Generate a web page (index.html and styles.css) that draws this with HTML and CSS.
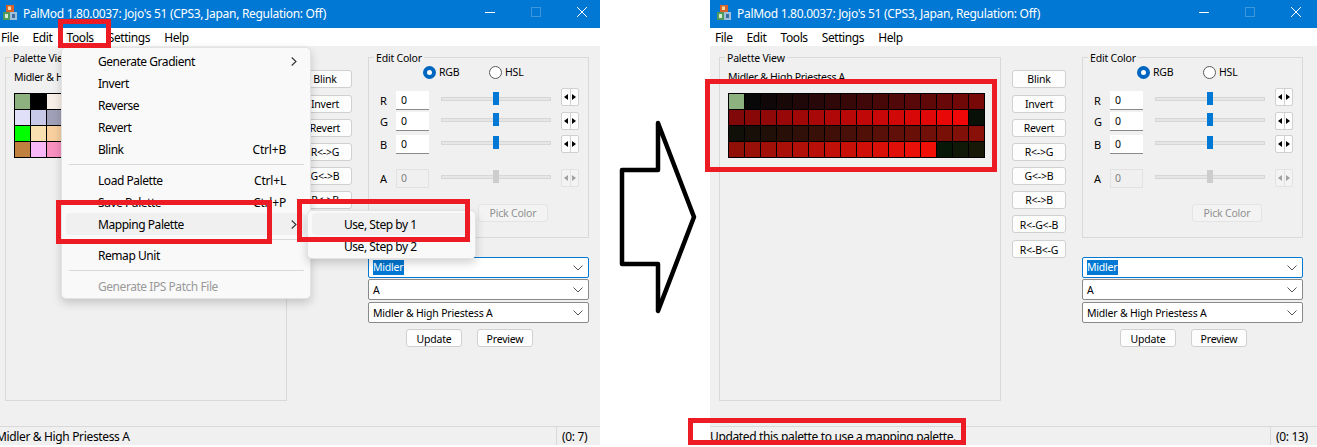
FILE: index.html
```html
<!DOCTYPE html>
<html lang="en">
<head>
<meta charset="utf-8">
<title>PalMod mapping palette</title>
<link rel="stylesheet" href="styles.css">
</head>
<body>
<div class="pane pane-left">
  <div class="window">
    <div class="titlebar">
      <svg class="app-icon" viewBox="0 0 14 15"><rect x="3" y="0" width="8" height="7" fill="#d9622b"/><rect x="5" y="1.5" width="3" height="3.5" fill="#f4d9a0"/><rect y="7" width="7" height="8" fill="#4f9a5a"/><rect x="7" y="7" width="7" height="8" fill="#9fc0dc"/><rect x="2" y="9" width="3" height="4" fill="#d7ecd2"/><rect x="9" y="9" width="3" height="4" fill="#3f6f9f"/></svg>
      <span class="title-text">PalMod 1.80.0037: Jojo's 51 (CPS3, Japan, Regulation: Off)</span>
      <div class="controls">
        <svg class="ctl" viewBox="0 0 10 10"><path d="M0 5.5H10" stroke="#fff"/></svg>
        <svg class="ctl" viewBox="0 0 10 10"><rect x=".5" y=".5" width="9" height="9" fill="none" stroke="#3d97dd"/></svg>
        <svg class="ctl" viewBox="0 0 10 10"><path d="M0 0L10 10M10 0L0 10" stroke="#fff"/></svg>
      </div>
    </div>
    <div class="menubar"><span>File</span><span>Edit</span><span class="hot">Tools</span><span>Settings</span><span>Help</span></div>
    <div class="client">
      <fieldset class="group palette-group">
        <legend>Palette View</legend>
        <div class="palette-name">Midler &amp; High Priestess A</div>
        <div class="palette">
          <i style="background:#8db280"></i><i style="background:#000000"></i><i style="background:#f8efe8"></i><i style="background:#f8e8e0"></i><i style="background:#e0d0d0"></i><i style="background:#c0b0b0"></i><i style="background:#a09090"></i><i style="background:#807070"></i><i style="background:#605050"></i><i style="background:#404040"></i><i style="background:#f8f8f8"></i><i style="background:#e8e8f8"></i><i style="background:#d8d8f8"></i><i style="background:#c8c8f0"></i><i style="background:#b8b8e8"></i><i style="background:#a8a8d8"></i>
          <i style="background:#e0e0f8"></i><i style="background:#c8c8e8"></i><i style="background:#a0a0b8"></i><i style="background:#8080a0"></i><i style="background:#606080"></i><i style="background:#404060"></i><i style="background:#f8f0c0"></i><i style="background:#f8e0a0"></i><i style="background:#f0c880"></i><i style="background:#d8a860"></i><i style="background:#b08040"></i><i style="background:#806030"></i><i style="background:#604020"></i><i style="background:#402810"></i><i style="background:#f8c0c0"></i><i style="background:#f8a0a0"></i>
          <i style="background:#00ff00"></i><i style="background:#f8e0b0"></i><i style="background:#f8d0a0"></i><i style="background:#e8b888"></i><i style="background:#d0a070"></i><i style="background:#b88858"></i><i style="background:#a07048"></i><i style="background:#885838"></i><i style="background:#704828"></i><i style="background:#583818"></i><i style="background:#402810"></i><i style="background:#f8f8a0"></i><i style="background:#f8e880"></i><i style="background:#f0d060"></i><i style="background:#d8b040"></i><i style="background:#b89030"></i>
          <i style="background:#c08040"></i><i style="background:#f8b8f8"></i><i style="background:#f890c0"></i><i style="background:#e070a0"></i><i style="background:#c05080"></i><i style="background:#a03060"></i><i style="background:#802040"></i><i style="background:#601030"></i><i style="background:#a0f8f8"></i><i style="background:#70d8e0"></i><i style="background:#50b0c0"></i><i style="background:#3090a0"></i><i style="background:#207080"></i><i style="background:#105060"></i><i style="background:#083040"></i><i style="background:#082030"></i>
        </div>
      </fieldset>
      <div class="actions">
        <button>Blink</button><button class="nudge">Invert</button><button>Revert</button><button>R&lt;-&gt;G</button><button>G&lt;-&gt;B</button><button>R&lt;-&gt;B</button><button class="lower">R&lt;-G&lt;-B</button><button class="nudge lower">R&lt;-B&lt;-G</button>
      </div>
      <div class="side">
        <fieldset class="group edit-group">
          <legend>Edit Color</legend>
          <div class="radios"><span class="radio on"></span><span class="radio-label">RGB</span><span class="radio"></span><span class="radio-label">HSL</span></div>
          <div class="chan chan-r"><span class="chan-label">R</span><span class="edit">0</span><span class="slider"><b></b></span><span class="spin"><em class="left"></em><em class="right"></em></span></div>
          <div class="chan chan-g"><span class="chan-label">G</span><span class="edit">0</span><span class="slider"><b></b></span><span class="spin"><em class="left"></em><em class="right"></em></span></div>
          <div class="chan chan-b"><span class="chan-label">B</span><span class="edit">0</span><span class="slider"><b></b></span><span class="spin"><em class="left"></em><em class="right"></em></span></div>
          <div class="chan chan-a off"><span class="chan-label">A</span><span class="edit">0</span><span class="slider"><b></b></span><span class="spin"><em class="left"></em><em class="right"></em></span></div>
          <button class="pick" disabled>Pick Color</button>
        </fieldset>
        <div class="combo focus"><span class="sel">Midler</span><svg class="chev" viewBox="0 0 10 6"><path d="M.5 .5L5 5L9.5 .5" fill="none" stroke="#555"/></svg></div>
        <div class="combo"><span>A</span><svg class="chev" viewBox="0 0 10 6"><path d="M.5 .5L5 5L9.5 .5" fill="none" stroke="#555"/></svg></div>
        <div class="combo third"><span>Midler &amp; High Priestess A</span><svg class="chev" viewBox="0 0 10 6"><path d="M.5 .5L5 5L9.5 .5" fill="none" stroke="#555"/></svg></div>
        <div class="bottom-btns"><button class="lower">Update</button><button class="lower">Preview</button></div>
      </div>
    </div>
    <div class="statusbar"><span class="status-msg">Midler &amp; High Priestess A</span><span class="status-pos">(0: 7)</span></div>
  </div>
</div>

<div class="menu menu-main">
  <div class="mi"><span>Generate Gradient</span><svg class="arrow" viewBox="0 0 6 9"><path d="M.7 .5L5 4.5L.7 8.5" fill="none" stroke="#333" stroke-width="1.1"/></svg></div>
  <div class="mi"><span>Invert</span></div>
  <div class="mi"><span>Reverse</span></div>
  <div class="mi"><span>Revert</span></div>
  <div class="mi"><span>Blink</span><span class="key">Ctrl+B</span></div>
  <div class="sep"></div>
  <div class="mi"><span>Load Palette</span><span class="key">Ctrl+L</span></div>
  <div class="mi"><span>Save Palette</span><span class="key">Ctrl+P</span></div>
  <div class="mi hover"><span>Mapping Palette</span><svg class="arrow" viewBox="0 0 6 9"><path d="M.7 .5L5 4.5L.7 8.5" fill="none" stroke="#333" stroke-width="1.1"/></svg></div>
  <div class="sep"></div>
  <div class="mi"><span>Remap Unit</span></div>
  <div class="sep"></div>
  <div class="mi dim"><span>Generate IPS Patch File</span></div>
</div>
<div class="menu menu-sub">
  <div class="mi hover"><span>Use, Step by 1</span></div>
  <div class="mi"><span>Use, Step by 2</span></div>
</div>

<div class="pane pane-right">
  <div class="window">
    <div class="titlebar">
      <svg class="app-icon" viewBox="0 0 14 15"><rect x="3" y="0" width="8" height="7" fill="#d9622b"/><rect x="5" y="1.5" width="3" height="3.5" fill="#f4d9a0"/><rect y="7" width="7" height="8" fill="#4f9a5a"/><rect x="7" y="7" width="7" height="8" fill="#9fc0dc"/><rect x="2" y="9" width="3" height="4" fill="#d7ecd2"/><rect x="9" y="9" width="3" height="4" fill="#3f6f9f"/></svg>
      <span class="title-text">PalMod 1.80.0037: Jojo's 51 (CPS3, Japan, Regulation: Off)</span>
      <div class="controls">
        <svg class="ctl" viewBox="0 0 10 10"><path d="M0 5.5H10" stroke="#fff"/></svg>
        <svg class="ctl" viewBox="0 0 10 10"><rect x=".5" y=".5" width="9" height="9" fill="none" stroke="#3d97dd"/></svg>
        <svg class="ctl" viewBox="0 0 10 10"><path d="M0 0L10 10M10 0L0 10" stroke="#fff"/></svg>
      </div>
    </div>
    <div class="menubar"><span>File</span><span>Edit</span><span>Tools</span><span>Settings</span><span>Help</span></div>
    <div class="client">
      <fieldset class="group palette-group">
        <legend>Palette View</legend>
        <div class="palette-name">Midler &amp; High Priestess A</div>
        <div class="palette">
          <i style="background:#8db280"></i><i style="background:#080808"></i><i style="background:#100808"></i><i style="background:#180808"></i><i style="background:#200808"></i><i style="background:#280808"></i><i style="background:#300808"></i><i style="background:#380808"></i><i style="background:#400808"></i><i style="background:#480808"></i><i style="background:#500808"></i><i style="background:#580808"></i><i style="background:#600808"></i><i style="background:#680808"></i><i style="background:#700808"></i><i style="background:#780808"></i>
          <i style="background:#800808"></i><i style="background:#880808"></i><i style="background:#900808"></i><i style="background:#980808"></i><i style="background:#a00808"></i><i style="background:#a80808"></i><i style="background:#b00808"></i><i style="background:#b80808"></i><i style="background:#c00808"></i><i style="background:#c80808"></i><i style="background:#d00808"></i><i style="background:#d80808"></i><i style="background:#e00808"></i><i style="background:#e80808"></i><i style="background:#f00808"></i><i style="background:#081008"></i>
          <i style="background:#101008"></i><i style="background:#181008"></i><i style="background:#201008"></i><i style="background:#281008"></i><i style="background:#301008"></i><i style="background:#381008"></i><i style="background:#401008"></i><i style="background:#481008"></i><i style="background:#501008"></i><i style="background:#581008"></i><i style="background:#601008"></i><i style="background:#681008"></i><i style="background:#701008"></i><i style="background:#781008"></i><i style="background:#801008"></i><i style="background:#881008"></i>
          <i style="background:#901008"></i><i style="background:#981008"></i><i style="background:#a01008"></i><i style="background:#a81008"></i><i style="background:#b01008"></i><i style="background:#b81008"></i><i style="background:#c01008"></i><i style="background:#c81008"></i><i style="background:#d01008"></i><i style="background:#d81008"></i><i style="background:#e01008"></i><i style="background:#e81008"></i><i style="background:#f01008"></i><i style="background:#081808"></i><i style="background:#101808"></i><i style="background:#181808"></i>
        </div>
      </fieldset>
      <div class="actions">
        <button>Blink</button><button class="nudge">Invert</button><button>Revert</button><button>R&lt;-&gt;G</button><button>G&lt;-&gt;B</button><button>R&lt;-&gt;B</button><button class="lower">R&lt;-G&lt;-B</button><button class="nudge lower">R&lt;-B&lt;-G</button>
      </div>
      <div class="side">
        <fieldset class="group edit-group">
          <legend>Edit Color</legend>
          <div class="radios"><span class="radio on"></span><span class="radio-label">RGB</span><span class="radio"></span><span class="radio-label">HSL</span></div>
          <div class="chan chan-r"><span class="chan-label">R</span><span class="edit">0</span><span class="slider"><b></b></span><span class="spin"><em class="left"></em><em class="right"></em></span></div>
          <div class="chan chan-g"><span class="chan-label">G</span><span class="edit">0</span><span class="slider"><b></b></span><span class="spin"><em class="left"></em><em class="right"></em></span></div>
          <div class="chan chan-b"><span class="chan-label">B</span><span class="edit">0</span><span class="slider"><b></b></span><span class="spin"><em class="left"></em><em class="right"></em></span></div>
          <div class="chan chan-a off"><span class="chan-label">A</span><span class="edit">0</span><span class="slider"><b></b></span><span class="spin"><em class="left"></em><em class="right"></em></span></div>
          <button class="pick" disabled>Pick Color</button>
        </fieldset>
        <div class="combo focus"><span class="sel">Midler</span><svg class="chev" viewBox="0 0 10 6"><path d="M.5 .5L5 5L9.5 .5" fill="none" stroke="#555"/></svg></div>
        <div class="combo"><span>A</span><svg class="chev" viewBox="0 0 10 6"><path d="M.5 .5L5 5L9.5 .5" fill="none" stroke="#555"/></svg></div>
        <div class="combo third"><span>Midler &amp; High Priestess A</span><svg class="chev" viewBox="0 0 10 6"><path d="M.5 .5L5 5L9.5 .5" fill="none" stroke="#555"/></svg></div>
        <div class="bottom-btns"><button class="lower">Update</button><button class="lower">Preview</button></div>
      </div>
    </div>
    <div class="statusbar"><span class="status-msg">Updated this palette to use a mapping palette.</span><span class="status-pos">(0: 13)</span></div>
  </div>
</div>

<svg class="big-arrow" viewBox="0 0 90 200"><path d="M39 4L75 98L39 192V145H3V51H39Z" fill="#fff" stroke="#000" stroke-width="4.5" stroke-linejoin="round"/></svg>

<div class="mark mark-tools"></div>
<div class="mark mark-mapping"></div>
<div class="mark mark-step"></div>
<div class="mark mark-palette"></div>
<div class="mark mark-status"></div>
</body>
</html>
```
FILE: styles.css
```css
* { box-sizing: border-box; }
html, body { margin: 0; height: 100%; }
body {
  position: relative;
  width: 1317px;
  height: 447px;
  overflow: hidden;
  background: #fff;
  font-family: "Noto Sans", "Open Sans", sans-serif;
  font-size: 10.5px;
  letter-spacing: -0.2px;
  color: #000;
}

/* Windows on the canvas */
.pane { position: absolute; top: 0; height: 447px; overflow: hidden; }
.pane-left { left: 0; width: 600px; }
.pane-left .window { margin-left: -4px; }
.pane-right { left: 710px; width: 607px; }
.window { width: 607px; height: 445px; display: flex; flex-direction: column; background: #f0f0f0; }

.titlebar {
  height: 28px;
  flex: none;
  background: #0078d4;
  color: #fff;
  display: flex;
  align-items: center;
  padding-left: 7px;
  font-size: 12px;
  letter-spacing: -0.3px;
}
.app-icon { width: 14px; height: 15px; margin-right: 6px; margin-top: -4px; }
.title-text { margin-top: -1px; }
.controls { margin-left: auto; display: flex; gap: 36px; padding-right: 16px; margin-top: -4px; }
.ctl { width: 10px; height: 10px; display: block; }

.menubar {
  height: 18px;
  flex: none;
  background: #fff;
  display: flex;
  gap: 14px;
  padding: 2px 0 0 5px;
  font-size: 12px;
  line-height: 16px;
  letter-spacing: -0.4px;
}
.menubar .hot { background: #f6f6f6; }

.client { flex: 1; display: flex; align-items: flex-start; padding: 3px 0 0 9px; }

.group {
  margin: 0;
  border: 1px solid #d9d9d9;
  padding: 0;
  min-width: 0;
}
.group legend {
  padding: 0 2px;
  height: 16px;
  line-height: 18px;
}

.palette-group { width: 282px; height: 352px; padding: 4px 0 0 8px; }
.palette-group legend { margin-left: -3px; }
.palette-name { height: 16px; line-height: 16px; letter-spacing: -0.3px; }
.palette {
  margin-top: 8px;
  width: 257px;
  display: grid;
  grid-template-columns: repeat(16, 15px);
  grid-auto-rows: 15px;
  gap: 1px;
  padding: 1px;
  background: #000;
}
.palette i { display: block; }

button {
  font: inherit;
  letter-spacing: inherit;
  color: #000;
  background: #fdfdfd;
  border: 1px solid #d0d0d0;
  border-radius: 3px;
  padding: 0;
  height: 18px;
  line-height: 15px;
}
button.lower { padding-top: 2px; }
.actions { margin: 21px 0 0 11px; width: 54px; display: flex; flex-direction: column; gap: 6px; }
.actions .nudge { margin-top: 1px; }

.side { margin-left: 16px; width: 221px; display: flex; flex-direction: column; }
.edit-group { width: 221px; padding: 0 0 15px 11px; }
.edit-group legend { margin-left: -6px; }
.radios { height: 16px; margin-top: -1px; display: flex; align-items: center; }
.radio {
  width: 13px;
  height: 13px;
  border-radius: 50%;
  border: 1px solid #5a5a5a;
  background: #fff;
}
.radio:first-child { margin-left: 43px; }
.radio.on { border: 4px solid #0067c0; background: #fff; }
.radio-label { margin-left: 3px; width: 50px; }

.chan { display: flex; align-items: center; height: 19px; }
.chan-r { margin-top: 11px; }
.chan-g { margin-top: 2px; }
.chan-b { margin-top: 4px; }
.chan-a { margin-top: 15px; }
.chan-label { width: 16px; font-size: 11px; }
.edit {
  width: 33px;
  height: 19px;
  line-height: 19px;
  padding-left: 5px;
  background: #fff;
  border-bottom: 1px solid #8a8a8a;
}
.slider {
  position: relative;
  width: 110px;
  height: 4px;
  margin: 0 0 4px 12px;
  background: #e6e6e6;
  border: 1px solid #d6d6d6;
}
.slider b {
  position: absolute;
  left: 51px;
  top: -6px;
  width: 6px;
  height: 13px;
  background: #0078d4;
}
.spin {
  width: 18px;
  height: 18px;
  margin: 0 0 2px 10px;
  display: flex;
  background: #fdfdfd;
  border: 1px solid #d0d0d0;
  border-radius: 2px;
}
.chan-r .spin { margin-bottom: 7px; }
.spin em { flex: 1; display: flex; align-items: center; justify-content: center; }
.spin em + em { border-left: 1px solid #d0d0d0; }
.spin em::before { content: ""; border-style: solid; border-color: transparent; }
.spin .left::before { border-width: 3.5px 4px 3.5px 0; border-right-color: #000; }
.spin .right::before { border-width: 3.5px 0 3.5px 4px; border-left-color: #000; }

.off { color: #808080; }
.off .edit { background: #f0f0f0; border: 1px solid #e2e2e2; padding-left: 4px; line-height: 17px; }
.off .slider b { background: #cdcdcd; }
.off .spin { background: #f3f3f3; border-color: #e2e2e2; }
.off .spin em + em { border-left-color: #e2e2e2; }
.off .spin .left::before { border-right-color: #a0a0a0; }
.off .spin .right::before { border-left-color: #a0a0a0; }
.off .chan-label { color: #000; }

.pick {
  display: block;
  margin: 16px 0 0 98px;
  width: 70px;
  color: #909090;
  background: #f3f3f3;
  border-color: #e4e4e4;
}

.combo {
  height: 21px;
  width: 221px;
  margin-top: 1px;
  display: flex;
  align-items: center;
  justify-content: space-between;
  padding: 0 4px 0 4px;
  background: #fff;
  border: 1px solid #8a8a8a;
  border-radius: 2px;
}
.combo.focus { margin-top: 19px; border-color: #0078d4; }
.combo.third { margin-top: 2px; }
.sel { background: #0078d4; color: #fff; padding: 0 1px 0 0; line-height: 15px; }
.chev { width: 10px; height: 6px; margin-right: 1px; }

.bottom-btns { display: flex; gap: 15px; margin: 6px 0 0 38px; }
.bottom-btns button { width: 56px; }

.statusbar {
  height: 19px;
  flex: none;
  border-top: 1px solid #d9d9d9;
  display: flex;
  font-size: 12px;
  letter-spacing: -0.35px;
}
.status-msg { flex: 1; line-height: 20px; }
.status-pos {
  width: 47px;
  padding-left: 5px;
  border-left: 1px solid #d9d9d9;
  line-height: 20px;
}

/* Popup menus over the left window */
.menu {
  position: absolute;
  background: #f9f9f9;
  border: 1px solid #e3e3e3;
  border-radius: 5px;
  box-shadow: 0 4px 10px rgba(0, 0, 0, .18);
  padding: 2px 0;
  font-size: 12px;
  letter-spacing: -0.45px;
}
.menu-main { left: 61px; top: 47px; width: 250px; height: 252px; }
.menu-sub { left: 307px; top: 210px; width: 169px; height: 49px; }
.mi {
  height: 22px;
  margin: 0 4px;
  padding: 0 9px 0 32px;
  display: flex;
  align-items: center;
  justify-content: space-between;
  border-radius: 4px;
}
.mi.hover { background: #f0f0f0; }
.mi.dim { color: #9a9a9a; }
.key { margin-right: 11px; letter-spacing: -0.2px; }
.arrow { width: 6px; height: 9px; }
.sep { height: 1px; background: #d9d9d9; margin: 4px 6px 4px 7px; }

/* The big arrow and the annotation rectangles drawn on top */
.big-arrow { position: absolute; left: 619px; top: 119px; width: 90px; height: 200px; }
.mark { position: absolute; border: 5px solid #ed1c24; }
.mark-tools { left: 58px; top: 19px; width: 53px; height: 29px; }
.mark-mapping { left: 56px; top: 200px; width: 216px; height: 44px; }
.mark-step { left: 297px; top: 199px; width: 173px; height: 43px; }
.mark-palette { left: 705px; top: 79px; width: 292px; height: 93px; }
.mark-status { left: 688px; top: 418px; width: 278px; height: 27px; }
```
